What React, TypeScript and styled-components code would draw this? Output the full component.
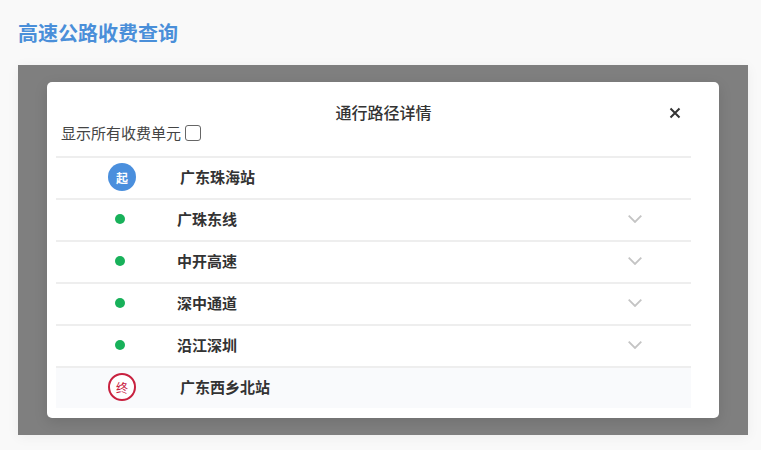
import { createGlobalStyle } from "styled-components";
import styled from "styled-components";

const GlobalStyle = createGlobalStyle`
  html, body {
    margin: 0;
    padding: 0;
    background-color: #f9f9f9;
    font-family: "Noto Sans CJK SC", "Liberation Sans", sans-serif;
  }
`;

const Page = styled.div`
  width: 761px;
  height: 450px;
  overflow: hidden;
  box-sizing: border-box;
  padding: 18px 13px 0 18px;
`;

const PageTitle = styled.h1`
  margin: 0 0 18px 0;
  height: 29px;
  line-height: 29px;
  font-size: 20px;
  font-weight: 700;
  color: #4a8fd9;
`;

const Overlay = styled.div`
  height: 370px;
  box-sizing: border-box;
  padding: 17px 29px 17px 29px;
  background-color: #7f7f7f;
  box-shadow: 0 2px 12px rgba(0, 0, 0, 0.05);
`;

const Dialog = styled.div`
  height: 336px;
  box-sizing: border-box;
  padding: 0 28px 10px 9px;
  background-color: #fff;
  border-radius: 5px;
  box-shadow: 0 4px 14px rgba(0, 0, 0, 0.12);
`;

const DialogHeader = styled.div`
  height: 74px;
  position: relative;
  border-bottom: 2px solid #eeeeee;
`;

const DialogTitle = styled.h2`
  margin: 0;
  padding: 18px 0 0 20px;
  line-height: 24px;
  font-size: 16px;
  font-weight: 500;
  color: #333;
  text-align: center;
`;

const CloseButton = styled.button`
  position: absolute;
  top: 25px;
  right: 10px;
  width: 12px;
  height: 12px;
  padding: 0;
  border: none;
  background: none;
  color: #333;
  display: flex;
`;

const ToggleLabel = styled.label`
  display: flex;
  align-items: center;
  gap: 4px;
  margin: 0 0 0 5px;
  height: 18px;
  font-size: 15px;
  color: #444;
`;

const ToggleText = styled.span`
  margin-bottom: 2px;
`;

const ToggleBox = styled.input`
  appearance: none;
  margin: 0;
  width: 16px;
  height: 16px;
  border: 1px solid #666;
  border-radius: 3px;
  background-color: #fff;
`;

const Row = styled.div<{ $end?: boolean }>`
  display: flex;
  align-items: center;
  box-sizing: border-box;
  height: ${(p) => (p.$end ? "40px" : "42px")};
  padding-bottom: 2px;
  border-bottom: ${(p) => (p.$end ? "none" : "2px solid #eeeeee")};
  background-color: ${(p) => (p.$end ? "#f9fafc" : "#fff")};
`;

const MarkerCell = styled.div`
  width: 128px;
  flex: none;
  display: flex;
  justify-content: center;
`;

const StartBadge = styled.span`
  margin-left: 4px;
  width: 28px;
  height: 28px;
  border-radius: 50%;
  background-color: #4a8fdd;
  color: #fff;
  font-size: 12px;
  font-weight: 700;
  display: flex;
  align-items: center;
  justify-content: center;
`;

const EndBadge = styled(StartBadge)`
  box-sizing: border-box;
  border: 2px solid #c8213f;
  background-color: #fff;
  color: #c8213f;
  font-weight: 400;
`;

const Dot = styled.span`
  width: 10px;
  height: 10px;
  border-radius: 50%;
  background-color: #18b15a;
`;

const StationName = styled.span`
  margin: 0 0 2px -4px;
  font-size: 15px;
  font-weight: 700;
  color: #333;
`;

const RoadName = styled.span`
  flex: 1;
  margin: 0 0 2px -7px;
  font-size: 15px;
  font-weight: 700;
  color: #333;
`;

const Expand = styled.div`
  width: 14px;
  margin-right: 49px;
  display: flex;
  color: #c4c4c4;
`;

const roads = ["广珠东线", "中开高速", "深中通道", "沿江深圳"];

export default function App() {
  return (
    <Page>
      <GlobalStyle />
      <PageTitle>高速公路收费查询</PageTitle>
      <Overlay>
        <Dialog>
          <DialogHeader>
            <DialogTitle>通行路径详情</DialogTitle>
            <CloseButton type="button">
              <svg width="12" height="12" viewBox="0 0 12 12">
                <path
                  d="M1.5 1.5L10.5 10.5M10.5 1.5L1.5 10.5"
                  stroke="currentColor"
                  strokeWidth="2"
                  fill="none"
                />
              </svg>
            </CloseButton>
            <ToggleLabel>
              <ToggleText>显示所有收费单元</ToggleText>
              <ToggleBox type="checkbox" />
            </ToggleLabel>
          </DialogHeader>
          <Row>
            <MarkerCell>
              <StartBadge>起</StartBadge>
            </MarkerCell>
            <StationName>广东珠海站</StationName>
          </Row>
          {roads.map((name) => (
            <Row key={name}>
              <MarkerCell>
                <Dot />
              </MarkerCell>
              <RoadName>{name}</RoadName>
              <Expand>
                <svg width="14" height="8" viewBox="0 0 14 8">
                  <path
                    d="M0.7 0.7L7 7L13.3 0.7"
                    stroke="currentColor"
                    strokeWidth="1.8"
                    fill="none"
                  />
                </svg>
              </Expand>
            </Row>
          ))}
          <Row $end>
            <MarkerCell>
              <EndBadge>终</EndBadge>
            </MarkerCell>
            <StationName>广东西乡北站</StationName>
          </Row>
        </Dialog>
      </Overlay>
    </Page>
  );
}
